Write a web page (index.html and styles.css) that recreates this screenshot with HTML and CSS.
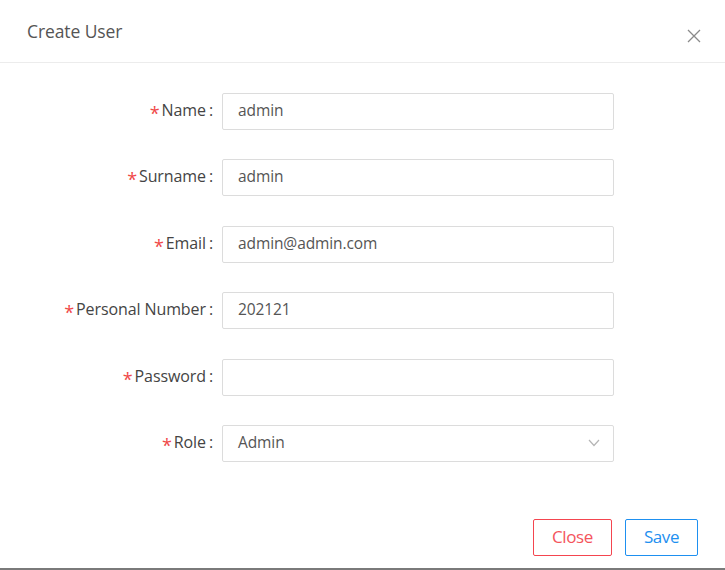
FILE: index.html
```html
<!DOCTYPE html>
<html>
<head>
<meta charset="utf-8">
<link rel="stylesheet" href="styles.css">
</head>
<body>
<div class="modal">
  <div class="modal-header">
    <span class="modal-title">Create User</span>
    <span class="modal-close">
      <svg width="14" height="14" viewBox="0 0 14 14"><path d="M1 1L13 13M13 1L1 13" stroke="#8a8a8a" stroke-width="1.3" fill="none"/></svg>
    </span>
  </div>
  <form class="modal-body">
    <div class="form-row">
      <label class="form-label"><span class="req">*</span>Name<span class="colon">:</span></label>
      <div class="form-input">admin</div>
    </div>
    <div class="form-row">
      <label class="form-label"><span class="req">*</span>Surname<span class="colon">:</span></label>
      <div class="form-input">admin</div>
    </div>
    <div class="form-row">
      <label class="form-label"><span class="req">*</span>Email<span class="colon">:</span></label>
      <div class="form-input">admin@admin.com</div>
    </div>
    <div class="form-row">
      <label class="form-label"><span class="req">*</span>Personal Number<span class="colon">:</span></label>
      <div class="form-input">202121</div>
    </div>
    <div class="form-row">
      <label class="form-label"><span class="req">*</span>Password<span class="colon">:</span></label>
      <div class="form-input"></div>
    </div>
    <div class="form-row">
      <label class="form-label"><span class="req">*</span>Role<span class="colon">:</span></label>
      <div class="form-input form-select">
        <span>Admin</span>
        <svg class="chev" width="12" height="8" viewBox="0 0 12 8"><path d="M1 1L6 6.5L11 1" stroke="#b5b5b5" stroke-width="1.2" fill="none"/></svg>
      </div>
    </div>
  </form>
  <div class="modal-footer">
    <button class="btn btn-close" type="button">Close</button>
    <button class="btn btn-save" type="button">Save</button>
  </div>
</div>
</body>
</html>
```
FILE: styles.css
```css
html, body {
  margin: 0;
  padding: 0;
  background: #fff;
}
body {
  font-family: "Open Sans", "Noto Sans", sans-serif;
  color: #555;
}
.modal {
  width: 725px;
  height: 570px;
  box-sizing: border-box;
  border-bottom: 2px solid #7a7a7a;
  display: flex;
  flex-direction: column;
}
.modal-header {
  height: 63px;
  box-sizing: border-box;
  border-bottom: 1px solid #ececec;
  display: flex;
  align-items: center;
  justify-content: space-between;
  padding: 0 24px 0 27px;
}
.modal-title {
  font-size: 17.5px;
  color: #555;
  letter-spacing: -0.1px;
}
.modal-close {
  display: flex;
  margin-top: 10px;
}
.modal-body {
  margin: 0;
  padding: 30px 0 0 0;
  display: flex;
  flex-direction: column;
  gap: 29.4px;
}
.form-row {
  display: flex;
  align-items: center;
}
.form-label {
  width: 222px;
  box-sizing: border-box;
  text-align: right;
  font-size: 16px;
  color: #444;
  letter-spacing: -0.1px;
  padding: 0 9px 3px 0;
  white-space: nowrap;
}
.req {
  color: #f04848;
  font-size: 18px;
  margin-right: 2px;
  position: relative;
  top: 4px;
  line-height: 1;
}
.colon {
  margin-left: 3px;
}
.form-input {
  width: 392px;
  height: 37px;
  box-sizing: border-box;
  border: 1px solid #dcdcdc;
  border-radius: 2px;
  padding: 0 15px 3px 15px;
  display: flex;
  align-items: center;
  font-size: 15.5px;
  color: #555;
  letter-spacing: -0.1px;
}
.form-select {
  justify-content: space-between;
  padding-right: 13px;
  padding-bottom: 0;
}
.form-select span {
  padding-bottom: 3px;
}
.chev {
  display: block;
}
.modal-footer {
  margin-top: auto;
  display: flex;
  justify-content: flex-end;
  gap: 13px;
  padding: 0 27px 12px 0;
}
.btn {
  height: 37px;
  background: #fff;
  border-radius: 2px;
  font-family: "Open Sans", "Noto Sans", sans-serif;
  font-size: 17px;
  letter-spacing: -0.4px;
  padding: 0 0 3px 0;
  cursor: pointer;
}
.btn-close {
  width: 79px;
  border: 1px solid #f4454f;
  color: #f4545c;
}
.btn-save {
  width: 73px;
  border: 1px solid #1e90f0;
  color: #1e90f0;
}
```
